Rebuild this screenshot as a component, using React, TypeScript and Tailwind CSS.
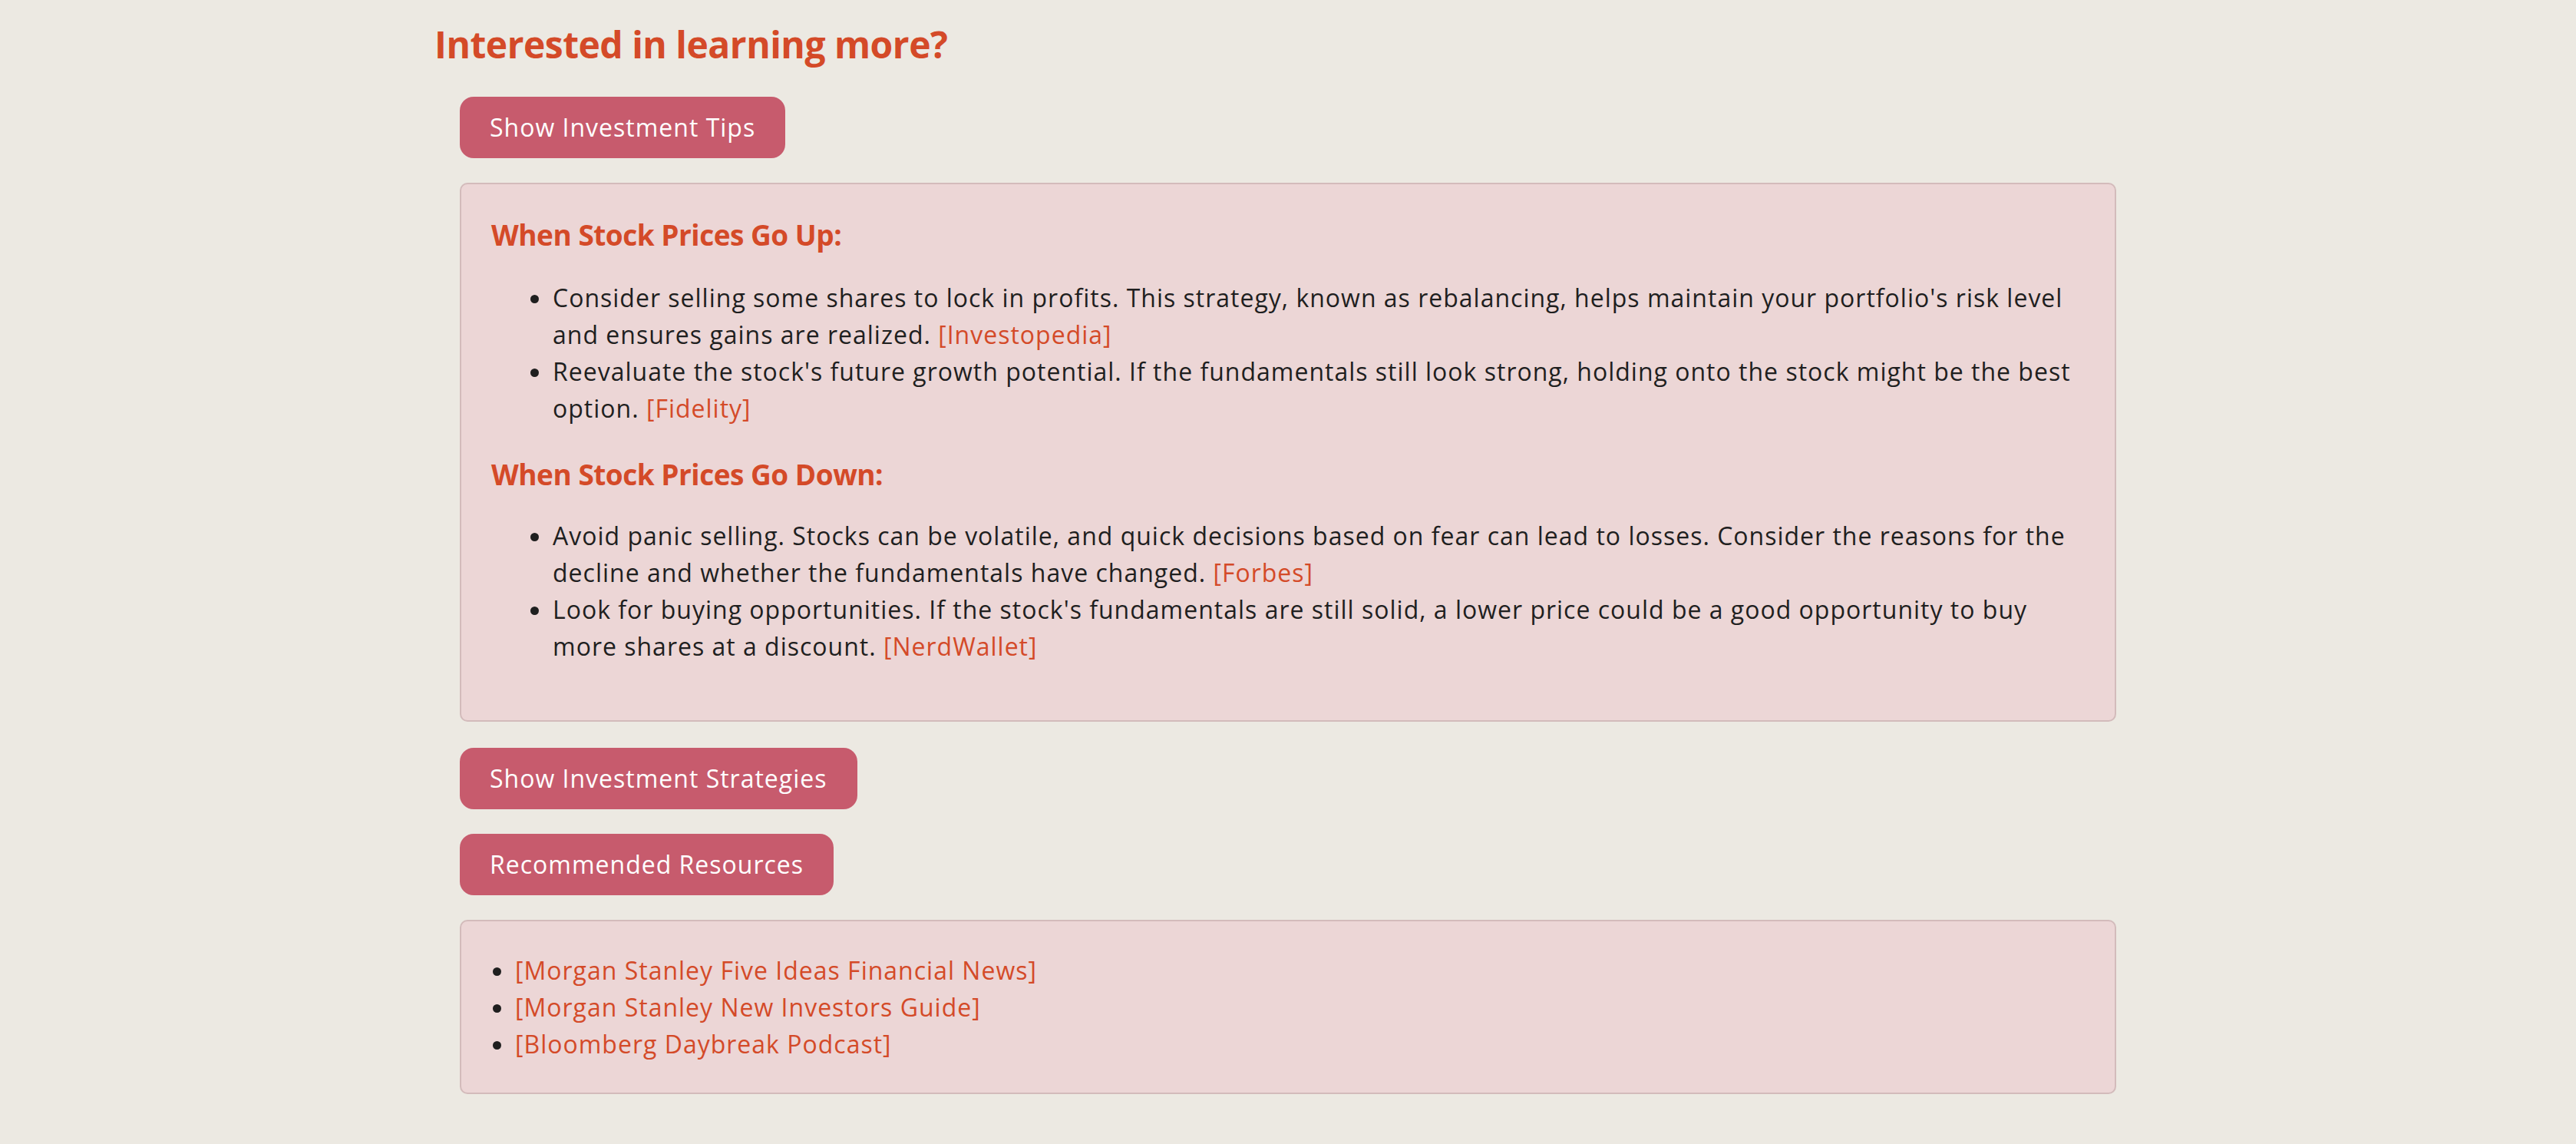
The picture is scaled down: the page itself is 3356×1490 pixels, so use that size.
import React, { useState } from 'react';

const tipsUp = [
  {
    text: "Consider selling some shares to lock in profits. This strategy, known as rebalancing, helps maintain your portfolio's risk level and ensures gains are realized.",
    source: 'Investopedia',
  },
  {
    text: "Reevaluate the stock's future growth potential. If the fundamentals still look strong, holding onto the stock might be the best option.",
    source: 'Fidelity',
  },
];

const tipsDown = [
  {
    text: 'Avoid panic selling. Stocks can be volatile, and quick decisions based on fear can lead to losses. Consider the reasons for the decline and whether the fundamentals have changed.',
    source: 'Forbes',
  },
  {
    text: "Look for buying opportunities. If the stock's fundamentals are still solid, a lower price could be a good opportunity to buy more shares at a discount.",
    source: 'NerdWallet',
  },
];

const resources = [
  'Morgan Stanley Five Ideas Financial News',
  'Morgan Stanley New Investors Guide',
  'Bloomberg Daybreak Podcast',
];

const ToggleButton = ({ label, onClick, className = '' }: { label: string; onClick?: () => void; className?: string }) => (
  <button
    onClick={onClick}
    className={`block rounded-[18px] bg-[#c75b6d] px-[39px] py-4 text-[32px] leading-[48px] tracking-[1px] text-white ${className}`}
  >
    {label}
  </button>
);

const TipList = ({ items, className = '' }: { items: { text: string; source: string }[]; className?: string }) => (
  <ul className={`list-disc pl-[80px] text-[32px] leading-[48px] tracking-[1px] text-[#1f1f1f] ${className}`}>
    {items.map((item, i) => (
      <li key={i}>
        {item.text}{' '}
        <a href="#" className="text-[#d44a28]">
          [{item.source}]
        </a>
      </li>
    ))}
  </ul>
);

export default function App() {
  const [showTips, setShowTips] = useState(true);
  const [showResources, setShowResources] = useState(true);

  return (
    <div className="min-h-screen bg-[#ece9e2] font-['Open_Sans',sans-serif]">
      <div className="mx-auto w-[2224px] pt-[30px] pb-[65px]">
        <h2 className="mb-[40px] text-[48px] font-bold leading-[56px] tracking-[-0.5px] text-[#d44a28]">
          Interested in learning more?
        </h2>

        <div className="px-[33px]">
          <ToggleButton label="Show Investment Tips" onClick={() => setShowTips(!showTips)} className="mb-8" />

          {showTips && (
            <div className="mb-[34px] rounded-[10px] border-2 border-[#d3bbbb] bg-[#ecd6d6] pt-[44px] pr-[40px] pb-[72px] pl-[39px]">
              <h3 className="mb-[36px] text-[37px] font-bold leading-[44px] tracking-[-0.5px] text-[#d44a28]">
                When Stock Prices Go Up:
              </h3>
              <TipList items={tipsUp} className="mb-[40px]" />
              <h3 className="mb-[34px] text-[37px] font-bold leading-[44px] tracking-[-0.5px] text-[#d44a28]">
                When Stock Prices Go Down:
              </h3>
              <TipList items={tipsDown} />
            </div>
          )}

          <ToggleButton label="Show Investment Strategies" className="mb-8" />
          <ToggleButton label="Recommended Resources" onClick={() => setShowResources(!showResources)} className="mb-8" />

          {showResources && (
            <div className="rounded-[10px] border-2 border-[#d3bbbb] bg-[#ecd6d6] px-[40px] pt-[40px] pb-[39px]">
              <ul className="list-disc pl-[30px] text-[32px] leading-[48px] tracking-[1px] text-[#1f1f1f]">
                {resources.map((r) => (
                  <li key={r}>
                    <a href="#" className="text-[#d44a28]">
                      [{r}]
                    </a>
                  </li>
                ))}
              </ul>
            </div>
          )}
        </div>
      </div>
    </div>
  );
}
